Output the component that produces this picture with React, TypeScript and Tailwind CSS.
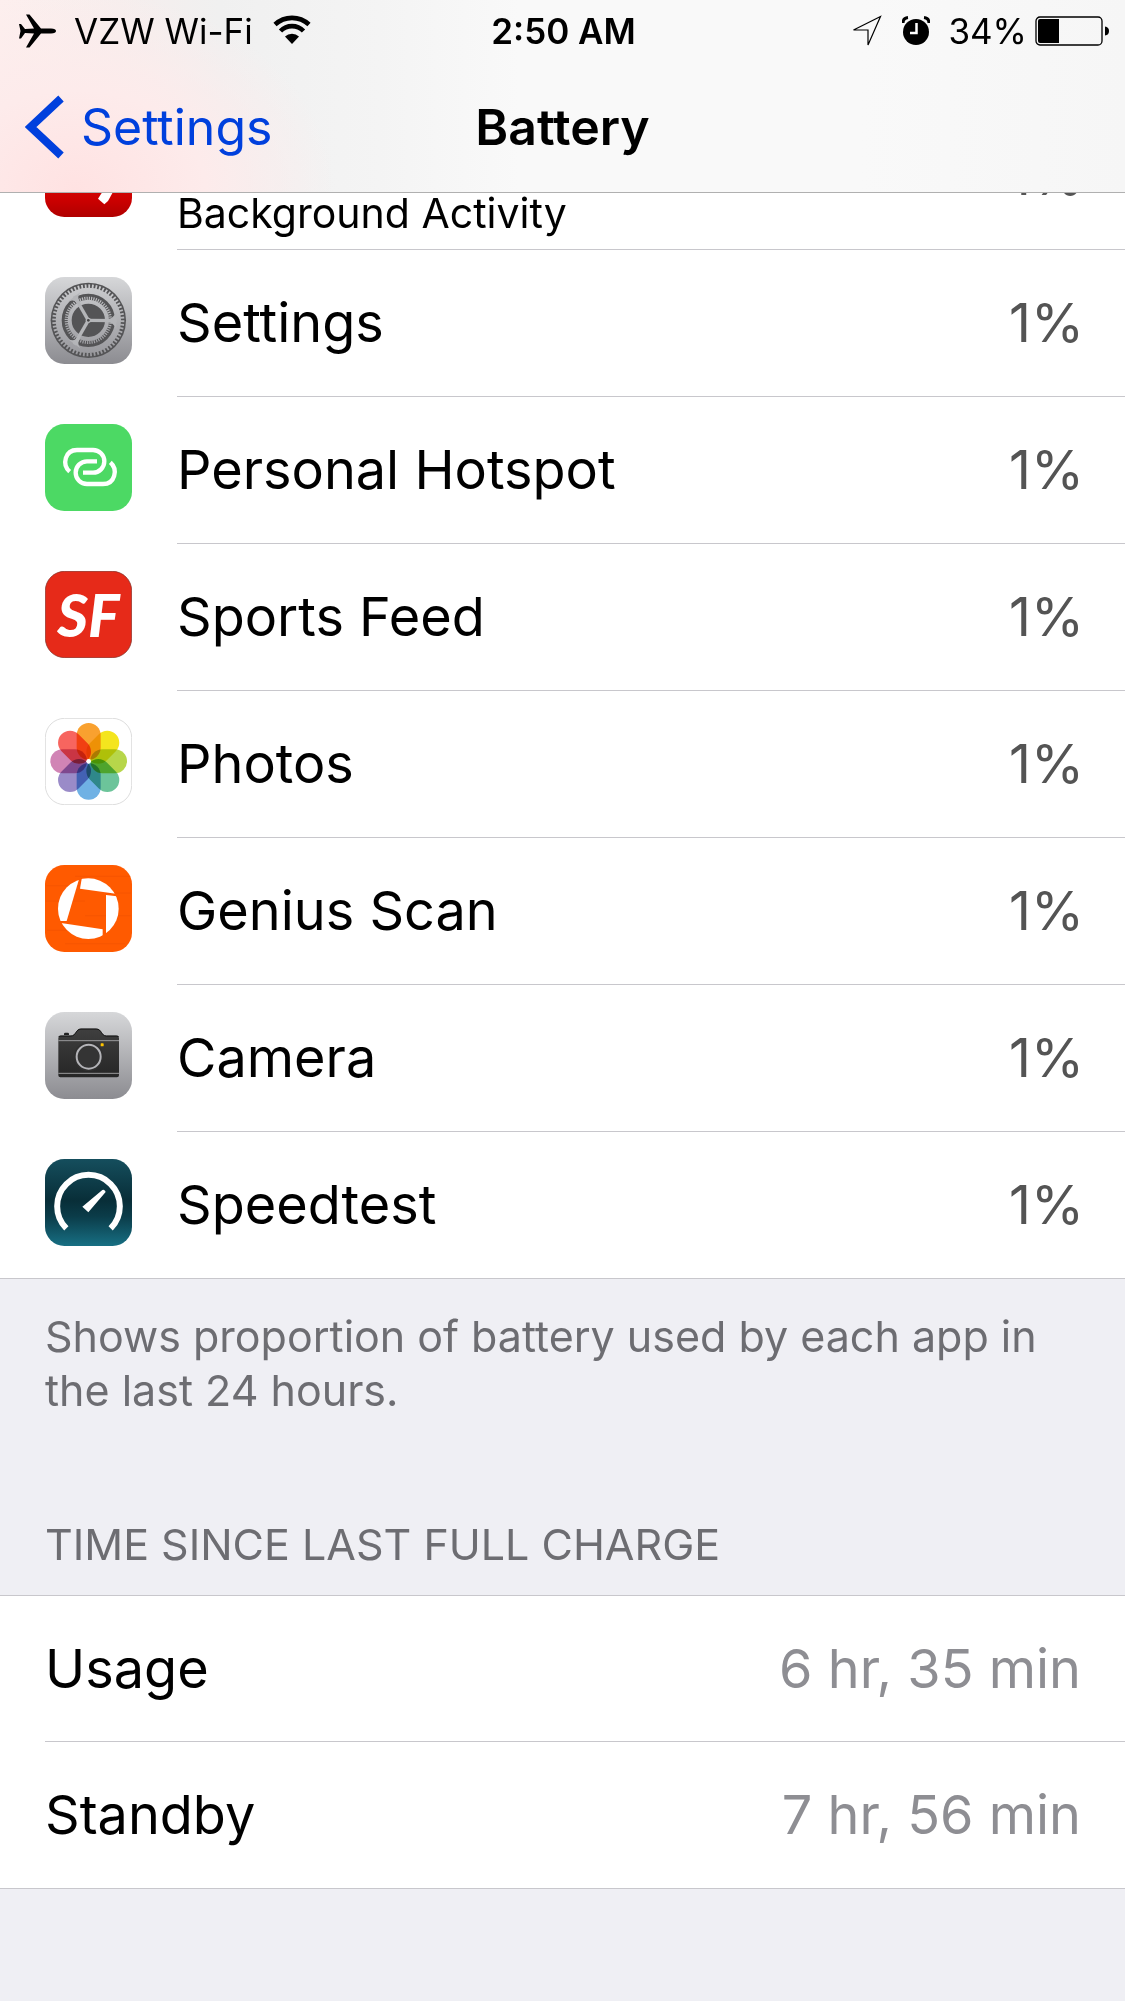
import type { ReactNode } from "react";

interface AppUsage {
    name: string;
    detail?: string;
    percent: string;
    icon: ReactNode;
}

interface ChargeStat {
    label: string;
    value: string;
}

const IconTile = ({ children }: { children: ReactNode }) => (
    <svg viewBox="0 0 261 261" className="w-[87px] h-[87px] shrink-0" aria-hidden="true">
        {children}
    </svg>
);

const VideoIcon = () => (
    <IconTile>
        <defs>
            <linearGradient id="video-bg" x1="0" y1="0" x2="0" y2="1">
                <stop offset="0" stopColor="#e62117" />
                <stop offset="0.8" stopColor="#cc0000" />
                <stop offset="1" stopColor="#b00000" />
            </linearGradient>
        </defs>
        <rect width="261" height="261" rx="58" fill="url(#video-bg)" />
        <path d="M159 206 L172 186 H204 L189 213 L178 223Z" fill="#fff" />
    </IconTile>
);

const SettingsIcon = () => (
    <IconTile>
        <defs>
            <linearGradient id="settings-bg" x1="0" y1="0" x2="0" y2="1">
                <stop offset="0" stopColor="#d6d7d9" />
                <stop offset="1" stopColor="#8c8c91" />
            </linearGradient>
            <linearGradient id="settings-gear" gradientUnits="userSpaceOnUse" x1="0" y1="0" x2="0" y2="261">
                <stop offset="0" stopColor="#d0d1d3" />
                <stop offset="1" stopColor="#929297" />
            </linearGradient>
        </defs>
        <rect width="261" height="261" rx="58" fill="url(#settings-bg)" />
        <circle cx="130" cy="130" r="113" fill="#545456" />
        <g fill="none" stroke="url(#settings-gear)">
            <circle cx="130" cy="130" r="89" strokeWidth="18" />
            <circle cx="130" cy="130" r="102" strokeWidth="12" pathLength="120" strokeDasharray="1 1" />
            <circle cx="130" cy="130" r="56" strokeWidth="12" />
            <circle cx="130" cy="130" r="66" strokeWidth="10" pathLength="120" strokeDasharray="1 1" />
        </g>
        <g stroke="#b4b5b8" strokeWidth="10">
            <path d="M130 130 L216 131" />
            <path d="M130 130 L88 57" />
            <path d="M130 130 L88 203" />
        </g>
        <g fill="#b4b5b8">
            <path d="M190 126 Q204 125 214 104 V156 Q204 137 190 136Z" />
            <path d="M97 78 Q89 65 68 74 L106 46 Q94 62 105 74Z" />
            <path d="M97 182 Q89 195 68 186 L106 214 Q94 198 105 186Z" />
        </g>
        <circle cx="130" cy="130" r="8" fill="#b4b5b8" />
        <circle cx="130" cy="130" r="4" fill="#444" />
    </IconTile>
);

const HotspotIcon = () => (
    <IconTile>
        <rect width="261" height="261" rx="58" fill="#4cd964" />
        <g fill="none" stroke="#fff" strokeWidth="13">
            <path d="M74 143 C50 122 60 78 96 78 H144 A34 34 0 0 1 144 146 H114" />
            <path d="M156 112 H126 A34 34 0 0 0 126 180 H174 C210 180 220 136 196 115" />
        </g>
    </IconTile>
);

const SportsFeedIcon = () => (
    <IconTile>
        <rect x="1" y="1" width="259" height="259" rx="58" fill="#e62a19" stroke="#7a2a22" strokeWidth="2" />
        <text x="130" y="197" textAnchor="middle" fill="#fff" className="font-['Lato',sans-serif] font-black italic text-[178px]">
            SF
        </text>
    </IconTile>
);

const petals = ["#f9a12f", "#f4e51e", "#b7d64a", "#6cc49a", "#6fb1e4", "#9a8bc8", "#d184b5", "#f7655f"];

const PhotosIcon = () => (
    <IconTile>
        <rect x="1" y="1" width="259" height="259" rx="58" fill="#fff" stroke="#dedede" strokeWidth="3" />
        <g className="isolate">
            {petals.map((color, index) => (
                <rect
                    key={color}
                    x="95"
                    y="15"
                    width="72"
                    height="110"
                    rx="36"
                    fill={color}
                    transform={`rotate(${index * 45} 131 130)`}
                    className="mix-blend-multiply"
                />
            ))}
        </g>
        <circle cx="131" cy="130" r="7" fill="#fff" />
    </IconTile>
);

const GeniusScanIcon = () => (
    <IconTile>
        <defs>
            <clipPath id="scan-disc">
                <circle cx="130" cy="131" r="91" />
            </clipPath>
        </defs>
        <rect width="261" height="261" rx="58" fill="#ff5a00" />
        <g stroke="#f25300" strokeWidth="2">
            <path d="M4 62 H150 M90 34 H256 M2 108 H120 M120 152 H258 M6 196 H90 M60 236 H240 M180 84 H258" />
        </g>
        <g fill="#fff" clipPath="url(#scan-disc)">
            <path d="M104 36 L65 168 H20 V20Z" />
            <path d="M112 30 L105 71 L212 86 L240 30Z" />
            <path d="M183 90 L240 97 V220 H183Z" />
            <path d="M48 174 L173 193 V240 H20Z" />
        </g>
    </IconTile>
);

const CameraIcon = () => (
    <IconTile>
        <defs>
            <linearGradient id="camera-bg" x1="0" y1="0" x2="0" y2="1">
                <stop offset="0" stopColor="#d6d7d9" />
                <stop offset="1" stopColor="#8c8c91" />
            </linearGradient>
            <linearGradient id="camera-body" x1="0" y1="0" x2="0" y2="1">
                <stop offset="0" stopColor="#3f3f3f" />
                <stop offset="1" stopColor="#262626" />
            </linearGradient>
        </defs>
        <rect width="261" height="261" rx="58" fill="url(#camera-bg)" />
        <path d="M57 69 V66 Q57 62 61 62 H68 Q72 62 72 66 V69Z" fill="#222" />
        <path
            d="M40 78 Q40 71 47 71 H78 C93 71 92 50 108 50 H154 C170 50 169 71 184 71 H215 Q222 71 222 78 V190 Q222 196 216 196 H46 Q40 196 40 190Z"
            fill="url(#camera-body)"
        />
        <path d="M41 75 Q42 72 47 72 H78 C93 72 92 51 108 51 H154 C170 51 169 72 184 72 H215 Q220 72 221 75" fill="none" stroke="#111" strokeWidth="3" />
        <path d="M40 86 H222 M40 184 H222" stroke="#9a9a9c" strokeWidth="3" />
        <circle cx="131" cy="134" r="44" fill="#303030" />
        <circle cx="131" cy="134" r="36" fill="#343434" stroke="#b4b4b8" strokeWidth="6" />
        <rect x="167" y="94" width="9" height="9" rx="2" fill="#ffc400" />
    </IconTile>
);

const SpeedtestIcon = () => (
    <IconTile>
        <defs>
            <linearGradient id="speed-bg" x1="0" y1="0" x2="0" y2="1">
                <stop offset="0" stopColor="#154e5d" />
                <stop offset="0.48" stopColor="#082e38" />
                <stop offset="0.66" stopColor="#0b3c49" />
                <stop offset="1" stopColor="#176f83" />
            </linearGradient>
        </defs>
        <rect width="261" height="261" rx="58" fill="url(#speed-bg)" />
        <path d="M64 208 A94 94 0 1 1 197 208" fill="none" stroke="#fff" strokeWidth="18" />
        <path d="M112 143 L172 93 Q176 91 180 95 T180 101 L130 160Z" fill="#fff" />
    </IconTile>
);

const apps: AppUsage[] = [
    { name: "", detail: "Background Activity", percent: "1%", icon: <VideoIcon /> },
    { name: "Settings", percent: "1%", icon: <SettingsIcon /> },
    { name: "Personal Hotspot", percent: "1%", icon: <HotspotIcon /> },
    { name: "Sports Feed", percent: "1%", icon: <SportsFeedIcon /> },
    { name: "Photos", percent: "1%", icon: <PhotosIcon /> },
    { name: "Genius Scan", percent: "1%", icon: <GeniusScanIcon /> },
    { name: "Camera", percent: "1%", icon: <CameraIcon /> },
    { name: "Speedtest", percent: "1%", icon: <SpeedtestIcon /> },
];

const chargeStats: ChargeStat[] = [
    { label: "Usage", value: "6 hr, 35 min" },
    { label: "Standby", value: "7 hr, 56 min" },
];

const StatusBar = () => (
    <div className="grid grid-cols-[1fr_auto_1fr] items-center h-[62px] pl-[18px] pr-4 text-[35px] leading-none">
        <div className="flex items-center">
            <svg viewBox="0 0 38 34" className="w-[38px] h-[34px]" aria-hidden="true">
                <path
                    d="M1 10 H3 L7 15 L16 14.5 L8 0.5 H11.5 L23 14.5 H33 Q38 14.8 38 17 Q38 19.2 33 19.5 H23 L11.5 33.5 H8 L16 19.5 L7 19 L3 24.5 H1 L2.5 17Z"
                    fill="#000"
                />
            </svg>
            <span className="ml-[18px]">VZW Wi-Fi</span>
            <svg viewBox="0 0 38 30" className="ml-5 mb-1 w-[38px] h-[30px]" aria-hidden="true">
                <g fill="none" stroke="#000" strokeWidth="4.6">
                    <path d="M2 10.5 A25 25 0 0 1 36 10.5" />
                    <path d="M7.5 17 A16 16 0 0 1 30.5 17" />
                </g>
                <path d="M12 22.5 A10 10 0 0 1 26 22.5 L19 30Z" fill="#000" />
            </svg>
        </div>
        <time className="font-semibold">2:50 AM</time>
        <div className="flex items-center justify-end">
            <svg viewBox="0 0 30 32" className="w-[30px] h-8" aria-hidden="true">
                <path d="M28.5 1.5 L1.5 15 H16 V30Z" fill="none" stroke="#000" strokeWidth="1.2" />
            </svg>
            <svg viewBox="0 0 28 30" className="ml-5 w-7 h-[30px]" aria-hidden="true">
                <circle cx="14" cy="16" r="13" fill="#000" />
                <path d="M1 7 Q1 2 6 1.5 M27 7 Q27 2 22 1.5" fill="none" stroke="#000" strokeWidth="3" />
                <path d="M14.5 7 V17 H8" fill="none" stroke="#fff" strokeWidth="2.5" />
            </svg>
            <span className="ml-[18px]">34%</span>
            <svg viewBox="0 0 74 30" className="ml-2 w-[74px] h-[30px]" aria-hidden="true">
                <rect x="1" y="1" width="66" height="28" rx="4" fill="none" stroke="#000" strokeWidth="1.3" />
                <path d="M3 5 Q3 3 5 3 H24 V27 H5 Q3 27 3 25Z" fill="#000" />
                <path d="M70 10.5 Q74 11 74 15 Q74 19 70 19.5Z" fill="#000" />
            </svg>
        </div>
    </div>
);

const NavBar = () => (
    <header className="sticky top-0 z-10 border-b border-[#b0b0b0] bg-[#f8f8f8] bg-[radial-gradient(ellipse_260px_200px_at_75px_190px,#ffe2e2_0%,#fdebeb_50%,transparent_100%),linear-gradient(to_right,#fdefee_0px,#f6eeed_120px,#f0f0f0_220px,#f4f4f4_380px,#f9f9f9_520px,#f9f9f9_860px,#f6f6f6_100%)]">
        <StatusBar />
        <div className="grid grid-cols-[1fr_auto_1fr] items-center h-[130px] px-[25px] text-[50px] leading-none">
            <button type="button" className="flex items-center gap-[17px] text-[#0040dd]">
                <svg viewBox="0 0 39 64" className="w-[39px] h-16" aria-hidden="true">
                    <path d="M36 3.5 L5.5 32 L36 60.5" fill="none" stroke="currentColor" strokeWidth="8" />
                </svg>
                Settings
            </button>
            <h1 className="font-semibold">Battery</h1>
        </div>
    </header>
);

const AppRow = ({ app }: { app: AppUsage }) => (
    <li className="group flex gap-[45px] pl-[45px]">
        <div className="pt-[27px]">{app.icon}</div>
        <div className="flex flex-1 items-center justify-between h-[147px] pr-[41px] border-b border-[#c8c7cc] group-last:h-[146px] group-last:border-b-0">
            {app.detail ? (
                <span className="self-end pb-[11px] text-[41px] leading-[50px]">{app.detail}</span>
            ) : (
                <span>{app.name}</span>
            )}
            <span className="text-[#545454]">{app.percent}</span>
        </div>
    </li>
);

const App = () => {
    return (
        <div className="min-h-screen bg-[#efeff4] font-['Inter',sans-serif] text-black">
            <NavBar />
            <main>
                <ul className="-mt-[90px] bg-white border-b border-[#c8c7cc] text-[54px] leading-[62px]">
                    {apps.map((app, index) => (
                        <AppRow key={index} app={app} />
                    ))}
                </ul>
                <p className="px-[45px] pt-[30px] text-[43px] leading-[54px] text-[#6d6d72]">
                    Shows proportion of battery used by each app in the last 24 hours.
                </p>
                <h2 className="px-[45px] pt-[100px] pb-6 text-[43px] leading-[54px] text-[#6d6d72] uppercase">
                    Time since last full charge
                </h2>
                <dl className="bg-white border-y border-[#c8c7cc] pl-[45px] text-[54px] leading-[62px]">
                    {chargeStats.map((stat) => (
                        <div key={stat.label} className="flex items-center justify-between h-[146px] pr-11 border-b border-[#c8c7cc] last:border-b-0">
                            <dt>{stat.label}</dt>
                            <dd className="text-[#8e8e93]">{stat.value}</dd>
                        </div>
                    ))}
                </dl>
            </main>
        </div>
    );
};

export default App;
